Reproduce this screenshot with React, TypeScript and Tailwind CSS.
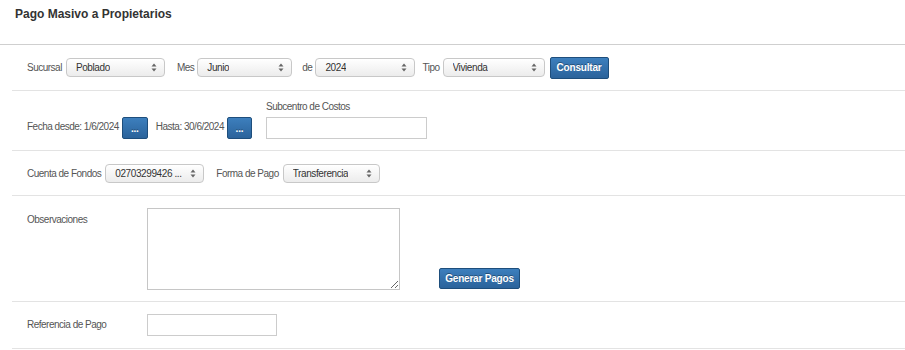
import React from "react";

function Arrows() {
  return (
    <svg width="6" height="9" viewBox="0 0 6 9" className="shrink-0">
      <path d="M3 0.5 L5.5 3.5 H0.5 Z" fill="#666" />
      <path d="M3 8.5 L5.5 5.5 H0.5 Z" fill="#666" />
    </svg>
  );
}

function FakeSelect({ value, width }: { value: string; width: string }) {
  return (
    <div
      className={`${width} h-[19px] flex items-center justify-between pl-[9px] pr-[7px] rounded-[4px] border border-[#c8c8c8] bg-gradient-to-b from-white to-[#ececec] text-[10px] tracking-[-0.4px] text-[#333] shadow-[inset_0_1px_0_#fff]`}
    >
      <span className="whitespace-nowrap overflow-hidden">{value}</span>
      <Arrows />
    </div>
  );
}

function BlueButton({ children, className = "" }: { children: React.ReactNode; className?: string }) {
  return (
    <button
      className={`flex items-center justify-center rounded-[2px] border border-[#1e4e7c] bg-gradient-to-b from-[#3d7fbd] to-[#2b639b] text-white font-bold text-[10px] tracking-[-0.2px] [text-shadow:0_-1px_0_rgba(0,0,0,0.35)] ${className}`}
    >
      {children}
    </button>
  );
}

export default function App() {
  return (
    <div className="w-[905px] h-[350px] bg-white font-['Liberation_Sans',Arial,sans-serif] text-[10px] tracking-[-0.5px] text-[#555] overflow-hidden">
      {/* Header */}
      <div className="h-[45px] border-b border-[#cfcfcf] pl-[15px] pt-[5px]">
        <h1 className="text-[12px] tracking-normal font-bold text-[#333]">Pago Masivo a Propietarios</h1>
      </div>

      <div className="ml-3">
        {/* Filters */}
        <div className="h-[46px] border-b border-[#e3e3e3] pl-[15px] flex items-center">
          <span className="mr-[4px]">Sucursal</span>
          <FakeSelect value="Poblado" width="w-[99px]" />
          <span className="ml-3 mr-[3px]">Mes</span>
          <FakeSelect value="Junio" width="w-[95px]" />
          <span className="ml-[10px] mr-[3px]">de</span>
          <FakeSelect value="2024" width="w-[100px]" />
          <span className="ml-[7px] mr-[3px]">Tipo</span>
          <FakeSelect value="Vivienda" width="w-[102px]" />
          <BlueButton className="ml-[5px] w-[59px] h-[22px]">Consultar</BlueButton>
        </div>

        {/* Dates */}
        <div className="h-[60px] border-b border-[#e3e3e3] pl-[15px] flex items-end pb-[11px]">
          <div className="flex items-end">
            <span className="mb-[5px]">Fecha desde: 1/6/2024</span>
            <BlueButton className="ml-[3px] w-[26px] h-[22px]">...</BlueButton>
            <span className="ml-[8px] mb-[5px]">Hasta: 30/6/2024</span>
            <BlueButton className="ml-[3px] w-[25px] h-[22px]">...</BlueButton>
          </div>
          <div className="ml-[14px] flex flex-col">
            <span className="mb-[3px]">Subcentro de Costos</span>
            <input className="w-[161px] h-[22px] border border-[#cccccc] outline-none" />
          </div>
        </div>

        {/* Account */}
        <div className="h-[45px] border-b border-[#e3e3e3] pl-[15px] flex items-center pt-[1px]">
          <span className="mr-[4px]">Cuenta de Fondos</span>
          <FakeSelect value="02703299426 ..." width="w-[99px]" />
          <span className="ml-3 mr-[4px]">Forma de Pago</span>
          <FakeSelect value="Transferencia" width="w-[97px]" />
        </div>

        {/* Observations */}
        <div className="h-[106px] border-b border-[#e3e3e3] pl-[15px] flex pt-[12px]">
          <span className="w-[120px] pt-[4px]">Observaciones</span>
          <textarea className="w-[253px] h-[82px] border border-[#c6c6c6] resize-both outline-none" />
          <BlueButton className="ml-[39px] mt-[60px] w-[81px] h-[21px]">Generar Pagos</BlueButton>
        </div>

        {/* Reference */}
        <div className="h-[47px] border-b border-[#e3e3e3] pl-[15px] flex items-center">
          <span className="w-[120px] -mt-[2px]">Referencia de Pago</span>
          <input className="w-[130px] h-[22px] border border-[#cccccc] outline-none" />
        </div>
      </div>
    </div>
  );
}
